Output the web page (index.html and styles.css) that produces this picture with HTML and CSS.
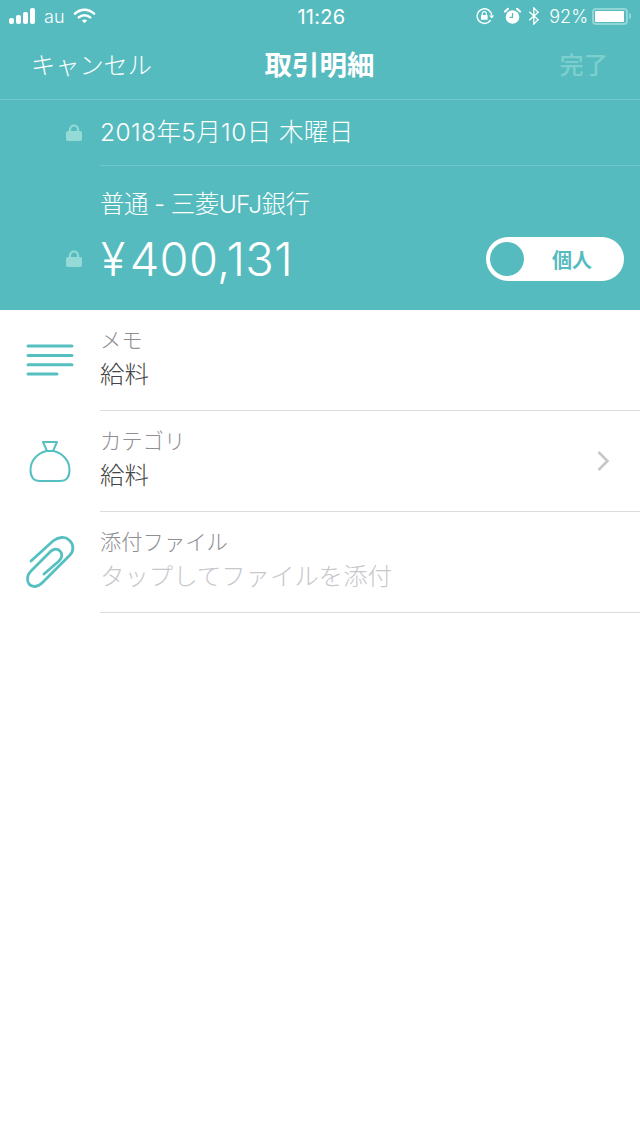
FILE: index.html
```html
<!DOCTYPE html>
<html lang="ja">

<head>
    <meta charset="UTF-8">
    <meta name="viewport" content="width=device-width, initial-scale=1.0">
    <title>取引明細</title>
    <link rel="stylesheet" href="styles.css">
</head>

<body>
    <div class="header">
        <div class="status-bar">
            <div class="status-left">
                <div class="signal"><i></i><i></i><i></i><i></i></div>
                <span class="carrier">au</span>
                <svg class="wifi" width="23" height="18" viewBox="0 0 24 18">
                    <path d="M2 6.500C8 1 16 1 22 6.500" fill="none" stroke="#fff" stroke-width="2.600" stroke-linecap="round"/>
                    <path d="M6 10.500C9.500 7.400 14.500 7.400 18 10.500" fill="none" stroke="#fff" stroke-width="2.600" stroke-linecap="round"/>
                    <path d="M9.200 13.600C11 12.200 13 12.200 14.800 13.600L12 16.600Z" fill="#fff"/>
                </svg>
            </div>
            <div class="status-time">11:26</div>
            <div class="status-right">
                <svg class="rotation" width="18" height="18" viewBox="0 0 18 18">
                    <path d="M14.500 13.200A7.300 7.300 0 1 1 15.700 8.500" fill="none" stroke="#fff" stroke-width="1.400"/>
                    <path d="M13.200 8.600h5l-2.500 2.800z" fill="#fff"/>
                    <rect x="5" y="8" width="6.600" height="4.800" rx=".6" fill="#fff"/>
                    <path d="M6.300 8V6.600a2 2 0 0 1 4 0V8" fill="none" stroke="#fff" stroke-width="1.100"/>
                </svg>
                <svg class="alarm" width="17" height="18" viewBox="0 0 17 18">
                    <circle cx="8.500" cy="10" r="6.800" fill="#fff"/>
                    <path d="M8.500 6v4.400H5.600" fill="none" stroke="#56bbbe" stroke-width="1.200"/>
                    <path d="M1 4.600 4 1.800M16 4.600 13 1.800" stroke="#fff" stroke-width="2" stroke-linecap="round"/>
                </svg>
                <svg class="bluetooth" width="12" height="18" viewBox="0 0 12 19">
                    <path d="M1 5l9.400 8.400L5.800 18V1l4.600 4.600L1 14" fill="none" stroke="#fff" stroke-width="1.400"/>
                </svg>
                <span class="battery-pct">92%</span>
                <div class="battery"><div class="battery-fill"></div></div>
                <div class="battery-tip"></div>
            </div>
        </div>

        <div class="nav">
            <span class="nav-cancel">キャンセル</span>
            <span class="nav-title">取引明細</span>
            <span class="nav-done">完了</span>
        </div>

        <div class="date-row">
            <div class="lock-col">
                <svg class="lock" width="16" height="18" viewBox="0 0 16 18">
                    <path d="M4 8V5.500a4 4 0 0 1 8 0V8" fill="none" stroke="#94dad7" stroke-width="2.200"/>
                    <rect x="0" y="7" width="16" height="10" rx="2" fill="#94dad7"/>
                </svg>
            </div>
            <div class="date-text">2018年5月10日 木曜日</div>
        </div>

        <div class="amount-block">
            <div class="account">普通 - 三菱UFJ銀行</div>
            <div class="amount-row">
                <div class="lock-col">
                    <svg class="lock" width="16" height="18" viewBox="0 0 16 18">
                        <path d="M4 8V5.500a4 4 0 0 1 8 0V8" fill="none" stroke="#94dad7" stroke-width="2.200"/>
                        <rect x="0" y="7" width="16" height="10" rx="2" fill="#94dad7"/>
                    </svg>
                </div>
                <div class="amount"><span class="yen">¥</span>400,131</div>
                <div class="toggle">
                    <div class="toggle-knob"></div>
                    <span class="toggle-label">個人</span>
                </div>
            </div>
        </div>
    </div>

    <div class="list">
        <div class="row">
            <div class="row-icon">
                <svg width="48" height="34" viewBox="0 0 48 34">
                    <path d="M2 3h44M2 12.500h44M2 21.800h44M2 31h29" stroke="#56bfc1" stroke-width="3" stroke-linecap="round"/>
                </svg>
            </div>
            <div class="row-body">
                <div class="row-label">メモ</div>
                <div class="row-value">給料</div>
            </div>
        </div>
        <div class="row">
            <div class="row-icon">
                <svg width="42" height="42" viewBox="0 0 42 42">
                    <path d="M14 2h14l-4 9h-6zM17.500 11C9 13 1.500 20 1.500 30 1.500 37 5 41 11 41H31C37 41 40.500 37 40.500 30 40.500 20 33 13 24.500 11" fill="none" stroke="#56bfc1" stroke-width="2" stroke-linejoin="round"/>
                </svg>
            </div>
            <div class="row-body">
                <div class="row-label">カテゴリ</div>
                <div class="row-value">給料</div>
            </div>
            <svg class="chevron" width="14" height="22" viewBox="0 0 14 22">
                <path d="M2.500 2l9 9-9 9" fill="none" stroke="#c7c7cc" stroke-width="2.600"/>
            </svg>
        </div>
        <div class="row">
            <div class="row-icon">
                <svg width="50" height="54" viewBox="0 -1 50 54">
                    <path d="M6 25 28 5C33 1 40 0 44 4 49 8 49 15 45 19L17 47C12.500 51.500 7 51.500 4 48 1.500 44.500 2 39 6 35L25 16C28 13 32 12 35 15 38 18 37 22 34 25L19 38" fill="none" stroke="#56bfc1" stroke-width="2.800" stroke-linecap="round"/>
                </svg>
            </div>
            <div class="row-body">
                <div class="row-label">添付ファイル</div>
                <div class="row-value placeholder">タップしてファイルを添付</div>
            </div>
        </div>
    </div>
</body>

</html>
```

FILE: styles.css
```css
body {
    font-family: "Inter", "Noto Sans CJK JP", sans-serif;
    font-weight: 300;
    margin: 0;
    padding: 0;
    background: #ffffff;
    height: 1137px;
    overflow: hidden;
}

.header {
    background: #56bbbe;
    color: #ffffff;
    height: 310px;
}

.status-bar {
    height: 32px;
    position: relative;
    display: flex;
    align-items: center;
    justify-content: space-between;
    padding: 0 9px;
    font-size: 18px;
}

.status-left,
.status-right {
    display: flex;
    align-items: center;
}

.signal {
    display: flex;
    align-items: flex-end;
    gap: 2px;
    height: 16px;
}

.signal i {
    display: block;
    width: 5px;
    background: #ffffff;
    border-radius: 2px;
}

.signal i:nth-child(1) { height: 6px; }
.signal i:nth-child(2) { height: 9px; }
.signal i:nth-child(3) { height: 12px; }
.signal i:nth-child(4) { height: 16px; }

.carrier {
    margin-left: 9px;
    margin-right: 8px;
}

.status-time {
    position: absolute;
    left: 3px;
    right: 0;
    top: 6px;
    text-align: center;
    font-size: 20px;
    letter-spacing: 0.3px;
    font-weight: 400;
    line-height: 22px;
}

.rotation {
    margin-right: 10px;
}

.alarm {
    margin-right: 7px;
}

.bluetooth {
    margin-right: 9px;
}

.battery-pct {
    margin-right: 4px;
}

.battery {
    width: 36px;
    height: 17px;
    box-sizing: border-box;
    border: 2px solid #8fd6d4;
    border-radius: 4px;
    padding: 1px;
}

.battery-fill {
    width: 29px;
    height: 100%;
    background: #ffffff;
    border-radius: 1px;
}

.battery-tip {
    width: 2px;
    height: 6px;
    margin-left: 1px;
    background: #8fd6d4;
    border-radius: 0 2px 2px 0;
}

.nav {
    height: 62px;
    display: grid;
    grid-template-columns: 1fr auto 1fr;
    align-items: center;
    padding: 0 32px 5px 31px;
    border-bottom: 1px solid #6fc8c9;
    font-size: 24.200px;
}

.nav-title {
    font-size: 27.500px;
    font-weight: 700;
}

.nav-done {
    font-weight: 500;
    color: #7ccfcd;
    text-align: right;
}

.date-row {
    height: 66px;
    box-sizing: border-box;
    padding-bottom: 5px;
    display: flex;
    align-items: center;
    position: relative;
    font-size: 24.500px;
    letter-spacing: 0.4px;
}

.date-row::after {
    content: '';
    position: absolute;
    left: 100px;
    right: 0;
    bottom: 0;
    height: 1px;
    background: #6fc8c9;
}

.date-row .lock-col {
    padding-top: 5px;
}

.lock-col {
    width: 100px;
    flex: none;
    display: flex;
    justify-content: flex-end;
    padding-right: 18px;
    box-sizing: border-box;
}

.account {
    padding: 20px 0 0 100px;
    font-size: 24.500px;
    letter-spacing: -0.6px;
    line-height: 36px;
}

.amount-row {
    display: flex;
    align-items: center;
    margin-top: 12px;
    padding-right: 16px;
}

.amount {
    font-size: 47px;
    font-weight: 300;
    letter-spacing: 0.3px;
    line-height: 50px;
}

.yen {
    display: inline-block;
    margin-left: 1px;
    margin-right: 3px;
    transform: scaleX(0.95);
    transform-origin: left;
}

.toggle {
    margin-left: auto;
    width: 138px;
    height: 44px;
    background: #ffffff;
    border-radius: 22px;
    display: flex;
    align-items: center;
    padding-left: 4px;
    box-sizing: border-box;
}

.toggle-knob {
    width: 34px;
    height: 34px;
    border-radius: 50%;
    background: #56bbbe;
}

.toggle-label {
    margin-left: 28px;
    color: #56bbbe;
    font-size: 20px;
    font-weight: 700;
}

.row {
    height: 100px;
    display: flex;
    align-items: center;
    position: relative;
    border-bottom: 1px solid transparent;
}

.row::after {
    content: '';
    position: absolute;
    left: 100px;
    right: 0;
    bottom: -1px;
    height: 1px;
    background: #dcdcde;
}

.row-icon {
    width: 100px;
    flex: none;
    display: flex;
    justify-content: center;
}

.row-body {
    flex: 1;
    padding-bottom: 4px;
}

.row-label {
    font-size: 21.300px;
    line-height: 30px;
    margin-bottom: 2px;
    color: #8e8e93;
}

.row-value {
    font-size: 24.400px;
    line-height: 34px;
    color: #444444;
}

.row-value.placeholder {
    color: #c7c7cc;
}

.chevron {
    margin-right: 30px;
}
```
